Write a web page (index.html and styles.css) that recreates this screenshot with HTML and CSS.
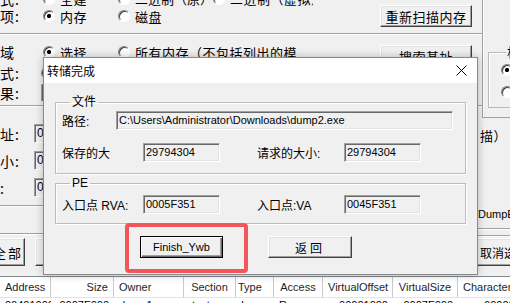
FILE: index.html
```html
<!DOCTYPE html>
<html lang="zh-CN">
<head>
  <meta charset="UTF-8">
  <meta name="viewport" content="width=device-width, initial-scale=1.0">
  <title>转储完成</title>
  <link rel="stylesheet" href="styles.css">
</head>
<body>
  <div class="app">
    <!-- main window (behind the dialog) -->
    <div class="head">
      <div class="head-main">
        <div class="opts">
          <div class="row row-top">
            <span class="lbl">格式:</span>
            <span class="opt"><i class="radio"></i>全建</span>
            <span class="opt opt-mid"><i class="radio"></i>二进制（原）</span>
            <span class="opt opt-clip"><i class="radio"></i>二进制（虚拟）</span>
          </div>
          <div class="row row-src">
            <span class="lbl">选项:</span>
            <span class="opt"><i class="radio on"></i>内存</span>
            <span class="opt"><i class="radio"></i>磁盘</span>
            <button class="btn btn-wide">重新扫描内存</button>
          </div>
        </div>
        <div class="area">
          <div class="row row-area">
            <span class="lbl">区域</span>
            <span class="opt"><i class="radio on"></i>选择</span>
            <span class="opt opt-long"><i class="radio"></i>所有内存（不包括列出的模块）</span>
            <button class="btn btn-wide btn-search">搜索基址</button>
          </div>
          <div class="row row-small">
            <span class="lbl">方式:</span>
            <i class="radio radio-edge on"></i>
          </div>
          <div class="row row-small">
            <span class="lbl">结果:</span>
            <span class="field field-edge"></span>
          </div>
        </div>
      </div>
      <div class="head-side">
        <fieldset class="group-side">
          <legend>格式</legend>
          <i class="radio on"></i>
          <i class="radio"></i>
        </fieldset>
      </div>
    </div>

    <div class="body">
      <div class="body-left">
        <div class="row row-field"><span class="lbl">基址:</span><span class="field">0</span></div>
        <div class="row row-field"><span class="lbl">大小:</span><span class="field">0</span></div>
        <div class="row row-field"><span class="lbl">值:</span><span class="field">0</span></div>
        <div class="band band-a"></div>
        <div class="band band-b"></div>
        <div class="btn-row">
          <button class="btn btn-all">全部</button>
          <button class="btn btn-next">反选</button>
        </div>
      </div>
      <div class="body-mid"></div>
      <div class="body-right">
        <p class="note">描）</p>
        <p class="note note-dump">DumpEx</p>
        <div class="band band-c"></div>
        <div class="band band-d"></div>
        <button class="btn btn-cancel">取消选择</button>
      </div>
    </div>

    <div class="table">
      <div class="trow thead">
        <span class="r">Address</span>
        <span class="r">Size</span>
        <span class="l">Owner</span>
        <span class="c">Section</span>
        <span class="l">Type</span>
        <span class="c">Access</span>
        <span class="c">VirtualOffset</span>
        <span class="c">VirtualSize</span>
        <span class="l">Characteristics</span>
      </div>
      <div class="trow tbody">
        <span class="r">00401000</span>
        <span class="r">0007F000</span>
        <span class="l">dump1</span>
        <span class="l">.text</span>
        <span class="l">Img</span>
        <span class="l">R</span>
        <span class="r">00001000</span>
        <span class="r">0007F000</span>
        <span class="r">60000020</span>
      </div>
    </div>

    <!-- dump finished dialog -->
    <div class="dlg">
      <div class="dlg-title">
        <span>转储完成</span>
        <svg class="close" width="11" height="11" viewBox="0 0 11 11">
          <path d="M0.5 0.5 L10.5 10.5 M10.5 0.5 L0.5 10.5" stroke="#000" stroke-width="1" fill="none"/>
        </svg>
      </div>
      <div class="dlg-body">
        <fieldset class="group group-file">
          <legend>文件</legend>
          <div class="frow">
            <span class="flbl flbl-path">路径:</span>
            <span class="edit edit-path">C:\Users\Administrator\Downloads\dump2.exe</span>
          </div>
          <div class="frow">
            <span class="flbl">保存的大</span>
            <span class="edit">29794304</span>
            <span class="flbl flbl-right">请求的大小:</span>
            <span class="edit">29794304</span>
          </div>
        </fieldset>
        <fieldset class="group group-pe">
          <legend>PE</legend>
          <div class="frow">
            <span class="flbl">入口点 RVA:</span>
            <span class="edit">0005F351</span>
            <span class="flbl flbl-right">入口点:VA</span>
            <span class="edit">0045F351</span>
          </div>
        </fieldset>
        <div class="dlg-actions">
          <button class="btn btn-default">Finish_Ywb</button>
          <button class="btn btn-back">返回</button>
        </div>
      </div>
      <div class="mark"></div>
    </div>
  </div>
</body>
</html>
```

FILE: styles.css
```css
/* General styles */
* {
  box-sizing: border-box;
}

body {
  margin: 0;
  background: #f0f0f0;
  color: #000;
  font-family: "Noto Sans CJK SC", sans-serif;
}

.app {
  position: relative;
  width: 510px;
  height: 303px;
  overflow: hidden;
  background: #f0f0f0;
  font-size: 13px;
  letter-spacing: 0.5px;
}

/* Classic controls */
.btn {
  display: block;
  flex: none;
  margin: 0;
  padding: 0;
  border: 1px solid;
  border-color: #fff #404040 #404040 #fff;
  box-shadow: inset -1px -1px 0 #a0a0a0, inset 1px 1px 0 #e3e3e3;
  background: #f0f0f0;
  color: #000;
  font-family: "Noto Sans CJK SC", sans-serif;
  font-size: 13px;
  letter-spacing: 0.5px;
  white-space: nowrap;
  overflow: hidden;
}

.radio {
  display: block;
  flex: none;
  width: 12px;
  height: 12px;
  border: 1px solid;
  border-color: #808080 #fff #fff #808080;
  border-radius: 50%;
  background: #fff;
  box-shadow: inset 1px 1px 0 #404040;
}

.radio.on {
  background: radial-gradient(circle, #000 0 1.8px, #fff 2.4px);
}

.field {
  display: block;
  flex: none;
  width: 30px;
  height: 19px;
  padding-left: 2px;
  border: 1px solid;
  border-color: #a0a0a0 #fff #fff #a0a0a0;
  box-shadow: inset 1px 1px 0 #696969;
  background: #f0f0f0;
  font-family: "Liberation Sans", sans-serif;
  font-size: 12px;
  line-height: 17px;
}

.row {
  display: flex;
  align-items: center;
  white-space: nowrap;
}

.lbl {
  flex: none;
  width: 58px;
  margin-left: -15px;
  font-size: 14px;
  line-height: 18px;
  letter-spacing: 1px;
}

.opt {
  display: flex;
  flex: none;
  align-items: center;
  gap: 5px;
  width: 75px;
}

.opt-mid {
  width: 95px;
  letter-spacing: 0;
}

.opt-clip {
  width: 100px;
  overflow: hidden;
}

.opt-long {
  width: 179px;
  overflow: hidden;
}

/* Top area */
.head {
  display: grid;
  grid-template-columns: 482px 28px;
  height: 118px;
}

.head-main {
  min-width: 0;
}

.opts {
  margin-top: -8px;
  padding-bottom: 6px;
  border-bottom: 1px solid #a0a0a0;
  box-shadow: 0 1px 0 #fff;
}

.row-top {
  height: 13px;
}

.row-src {
  height: 22px;
}

.btn-wide {
  width: 92px;
  height: 22px;
  margin-left: auto;
  margin-right: 10px;
}

.area {
  padding-top: 7px;
  padding-bottom: 2px;
  border-bottom: 1px solid #a0a0a0;
  box-shadow: 0 1px 0 #fff;
}

.row-area {
  height: 22px;
}

.btn-search {
  align-self: flex-start;
  margin-top: 4px;
}

.row-small {
  height: 20px;
}

.radio-edge {
  margin-left: -2px;
}

.field-edge {
  margin-left: -2px;
  height: 18px;
}

.head-side {
  height: 118px;
  padding: 44px 0 0 5px;
  border-left: 1px solid #a0a0a0;
  border-bottom: 1px solid #a0a0a0;
  box-shadow: inset 1px 0 0 #fff;
  overflow: hidden;
}

.group-side {
  width: 40px;
  min-width: 0;
  margin: 0;
  padding: 4px 0 9px 12px;
  border: 1px solid #b9b9b9;
  box-shadow: inset 1px 1px 0 #fff;
}

.group-side legend {
  margin-left: 5px;
  padding: 0 1px;
  font-size: 13px;
  line-height: 16px;
  white-space: nowrap;
}

.group-side .radio + .radio {
  margin-top: 10px;
}

/* Middle area */
.body {
  display: grid;
  grid-template-columns: 60px 1fr 34px;
  height: 158px;
}

.body-left {
  padding-top: 2px;
}

.row-field {
  height: 27px;
}

.row-field .lbl {
  width: 49px;
}

.band {
  border-bottom: 1px solid #a0a0a0;
  box-shadow: 0 1px 0 #fff;
}

.band-a {
  height: 5px;
}

.band-b {
  height: 28px;
}

.btn-row {
  display: flex;
  padding-top: 4px;
}

.btn-all {
  width: 55px;
  height: 28px;
  margin-left: -30px;
  padding-right: 1px;
  text-align: right;
  letter-spacing: 2px;
}

.btn-next {
  width: 60px;
  height: 28px;
  margin-left: 10px;
}

.body-right {
  padding-left: 4px;
  white-space: nowrap;
}

.note {
  margin: 9px 0 0;
  line-height: 18px;
}

.note-dump {
  margin-top: 60px;
  margin-left: -2px;
  font-family: "Liberation Sans", sans-serif;
  font-size: 11px;
  letter-spacing: 0;
}

.band-c {
  height: 6px;
  margin-left: -4px;
}

.band-d {
  height: 7px;
  margin-left: -4px;
}

.btn-cancel {
  width: 52px;
  height: 28px;
  margin-top: 2px;
  margin-left: -4px;
  padding-left: 3px;
  text-align: left;
  font-size: 12px;
  letter-spacing: 0;
}

/* Section table */
.table {
  width: 540px;
  border-top: 1px solid #828790;
  background: #fff;
  font-family: "Liberation Sans", sans-serif;
  font-size: 11px;
  letter-spacing: 0;
}

.trow {
  display: grid;
  grid-template-columns: 51px 63px 70px 52px 38px 49px 70px 65px 80px;
  white-space: nowrap;
}

.trow span {
  padding: 0 5px;
  overflow: hidden;
}

.thead span {
  height: 21px;
  line-height: 20px;
  border-right: 1px solid #c9c9c9;
  border-bottom: 1px solid #e3e3e3;
  color: #1e1e1e;
}

.tbody span {
  line-height: 15px;
}

.r {
  text-align: right;
}

.c {
  text-align: center;
}

.l {
  text-align: left;
}

.thead .l:nth-child(5) {
  padding-left: 2px;
}

/* Dialog */
.dlg {
  position: absolute;
  left: 43px;
  top: 57px;
  width: 435px;
  height: 218px;
  border: 1px solid #8a8a8a;
  background: #f0f0f0;
  box-shadow: 0 0 8px rgba(0, 0, 0, 0.25);
  letter-spacing: 0;
  font-size: 12px;
}

.dlg-title {
  display: flex;
  align-items: center;
  justify-content: space-between;
  height: 25px;
  padding: 0 10px 0 3px;
  background: #fff;
  line-height: 16px;
}

.close {
  display: block;
}

.dlg-body {
  padding: 0 11px;
}

.group {
  min-width: 0;
  margin: 0;
  border: 1px solid #bcbcbc;
  box-shadow: inset 1px 1px 0 #fff, 1px 1px 0 #fff;
}

.group legend {
  margin-left: 8px;
  padding: 0 2px;
  font-family: "Liberation Sans", "Noto Sans CJK SC", sans-serif;
  font-size: 12px;
  line-height: 16px;
}

.group-file {
  margin-top: 11px;
  padding: 1px 12px 11px 6px;
}

.group-pe {
  margin-top: 1px;
  padding: 4px 12px 9px 6px;
}

.frow {
  display: flex;
  align-items: center;
  height: 19px;
  white-space: nowrap;
}

.frow + .frow {
  margin-top: 13px;
}

.flbl {
  flex: none;
  width: 81px;
  font-family: "Liberation Sans", "Noto Sans CJK SC", sans-serif;
  font-size: 12px;
}

.flbl-path {
  width: 54px;
}

.flbl-right {
  width: 87px;
  margin-left: 37px;
}

.edit {
  display: block;
  flex: none;
  width: 77px;
  height: 19px;
  padding-left: 2px;
  border: 1px solid;
  border-color: #a0a0a0 #fff #fff #a0a0a0;
  box-shadow: inset 1px 1px 0 #696969, inset -1px -1px 0 #e3e3e3;
  font-family: "Liberation Sans", sans-serif;
  font-size: 11px;
  line-height: 17px;
  overflow: hidden;
}

.edit-path {
  flex: 1;
  width: auto;
}

.dlg-actions {
  display: flex;
  gap: 45px;
  margin-top: 12px;
  padding-left: 85px;
}

.dlg-actions .btn {
  height: 22px;
  font-size: 11px;
}

.btn-default {
  width: 83px;
  border-color: #000;
  box-shadow: inset 1px 1px 0 #fff, inset -1px -1px 0 #696969, inset -2px -2px 0 #a0a0a0;
  font-family: "Liberation Sans", sans-serif;
  letter-spacing: 0;
}

.dlg-actions .btn-back {
  width: 84px;
  font-size: 12px;
  letter-spacing: 3px;
}

/* red highlight drawn over the screenshot */
.mark {
  position: absolute;
  left: 81px;
  top: 165px;
  width: 123px;
  height: 50px;
  border: 4px solid #f2555a;
  border-radius: 4px;
}
```
